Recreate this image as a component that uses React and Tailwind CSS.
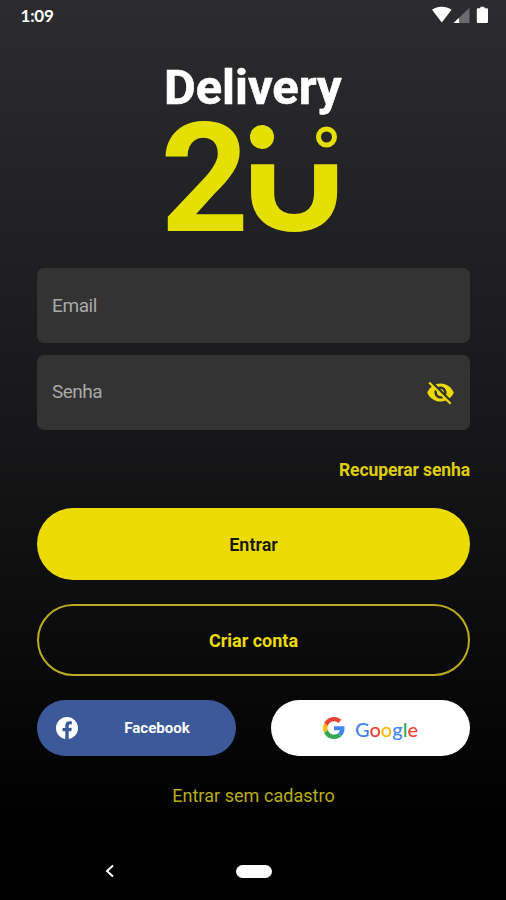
import React, { useState } from 'react';
import { MdVisibility, MdVisibilityOff } from 'react-icons/md';

function StatusBar() {
  return (
    <div className="flex h-[30px] items-center justify-between pl-[20.5px] pr-[17px]">
      <span className="font-['Lato'] text-[17px] font-bold leading-none text-white tracking-[-0.2px]">1:09</span>
      <svg width="58" height="20" viewBox="0 0 58 20" className="-mt-[1px]">
        <path d="M1 4.8C6.5.8 15 .8 20.6 4.8L10.8 17.6Z" fill="#fff" />
        <path d="M38.500 2.8V18H22.500Z" fill="#6c6c6e" />
        <path d="M28 12.800V18H22.500Z" fill="#fff" />
        <path d="M47 3.300h2.400V1.800h4v1.500h2.400q1.200 0 1.200 1.200v12.300q0 1.200-1.200 1.200H47q-1.200 0-1.200-1.200V4.500q0-1.200 1.200-1.200Z" fill="#fff" />
      </svg>
    </div>
  );
}

function Logo() {
  return (
    <svg width="190" height="208" viewBox="0 0 190 208" className="font-['Roboto'] font-bold">
      <defs>
        <clipPath id="smile">
          <rect x="80" y="104.300" width="110" height="75" />
        </clipPath>
      </defs>
      <text x="4" y="44" fontSize="49" fill="#fff" stroke="#fff" strokeWidth="0.6" textLength="177.500" lengthAdjust="spacingAndGlyphs">Delivery</text>
      <text transform="translate(0.300 171) scale(1.02 1)" fontSize="152" fill="#e5df00">2</text>
      <g clipPath="url(#smile)">
        <text x="82" y="169.500" fontSize="158" fill="#e5df00">U</text>
      </g>
      <circle cx="102" cy="77" r="12" fill="#e5df00" />
      <circle cx="166.500" cy="77" r="8" fill="none" stroke="#e5df00" strokeWidth="5" />
    </svg>
  );
}

function GoogleG() {
  return (
    <svg width="22" height="22" viewBox="0 0 48 48">
      <path fill="#EA4335" d="M24 9.500c3.540 0 6.710 1.220 9.210 3.600l6.850-6.850C35.900 2.380 30.470 0 24 0 14.620 0 6.510 5.380 2.560 13.220l7.980 6.190C12.430 13.720 17.740 9.500 24 9.500z" />
      <path fill="#4285F4" d="M46.980 24.550c0-1.570-.15-3.090-.38-4.550H24v9.020h12.940c-.58 2.960-2.260 5.480-4.780 7.180l7.730 6c4.510-4.180 7.090-10.360 7.090-17.650z" />
      <path fill="#FBBC05" d="M10.530 28.590A14.500 14.500 0 0 1 9.770 24c0-1.600.27-3.140.76-4.590l-7.980-6.190A23.900 23.900 0 0 0 0 24c0 3.880.92 7.540 2.560 10.780z" />
      <path fill="#34A853" d="M24 48c6.480 0 11.930-2.130 15.890-5.810l-7.730-6c-2.150 1.450-4.920 2.300-8.160 2.300-6.260 0-11.570-4.220-13.470-9.910l-7.980 6.190C6.510 42.620 14.620 48 24 48z" />
    </svg>
  );
}

function FacebookIcon() {
  return (
    <svg width="22" height="22" viewBox="0 0 24 24" fill="#fff">
      <path d="M24 12.070C24 5.410 18.630 0 12 0S0 5.410 0 12.070C0 18.100 4.390 23.090 10.130 24v-8.440H7.080v-3.490h3.050V9.410c0-3.020 1.790-4.690 4.530-4.690 1.310 0 2.680.24 2.680.24v2.970h-1.510c-1.490 0-1.960.93-1.960 1.890v2.250h3.330l-.53 3.490h-2.800V24C19.610 23.090 24 18.100 24 12.070z" />
    </svg>
  );
}

export default function App() {
  const [showPassword, setShowPassword] = useState(false);
  const EyeIcon = showPassword ? MdVisibility : MdVisibilityOff;

  return (
    <div className="flex h-[900px] w-[506px] flex-col overflow-hidden bg-linear-to-b/srgb from-[#2c2c2e] via-[#161618] via-50% to-black to-92% font-['Roboto',sans-serif]">
      <StatusBar />

      <div className="flex justify-center pl-[4px] pt-[30px]">
        <Logo />
      </div>

      <form className="flex flex-col pl-[37px] pr-[36px]" onSubmit={(e) => e.preventDefault()}>
        <input
          type="text"
          placeholder="Email"
          className="h-[75px] rounded-[7px] bg-[#333333] px-[15px] text-[19px] tracking-[-0.4px] text-white outline-none placeholder:text-[#a9a9a9]"
        />
        <div className="mt-[12px] flex h-[75px] items-center rounded-[7px] bg-[#333333] pl-[15px] pr-[15px]">
          <input
            type={showPassword ? 'text' : 'password'}
            placeholder="Senha"
            className="min-w-0 flex-1 bg-transparent text-[19px] tracking-[-0.5px] text-white outline-none placeholder:text-[#a9a9a9]"
          />
          <button type="button" aria-label="Mostrar senha" onClick={() => setShowPassword(!showPassword)}>
            <EyeIcon className="size-[29px] text-[#ecda05]" />
          </button>
        </div>

        <button type="button" className="mt-[28px] self-end text-[17.5px] font-bold leading-[24px] tracking-[-0.1px] text-[#dfcd0c]">
          Recuperar senha
        </button>

        <button type="submit" className="mt-[26px] h-[72px] rounded-full bg-[#ecda03] text-[18px] font-semibold text-[#16160a]">
          Entrar
        </button>
        <button type="button" className="mt-[24px] h-[72px] rounded-full border-2 border-[#bcab20] text-[18px] font-bold text-[#ecda05]">
          Criar conta
        </button>

        <div className="mt-[24px] flex justify-between">
          <button type="button" className="flex h-[56px] w-[199px] items-center rounded-full bg-[#3c5a99] pl-[19px] text-white">
            <FacebookIcon />
            <span className="flex-1 text-center text-[15px] font-bold">Facebook</span>
          </button>
          <button type="button" className="flex h-[56px] w-[199px] items-center justify-center gap-[10px] rounded-full bg-white">
            <GoogleG />
            <span className="pt-[2px] font-['Lato'] text-[20px] font-medium leading-none">
              <span className="text-[#4285f4]">G</span>
              <span className="text-[#ea4335]">o</span>
              <span className="text-[#fbbc05]">o</span>
              <span className="text-[#4285f4]">g</span>
              <span className="text-[#34a853]">l</span>
              <span className="text-[#ea4335]">e</span>
            </span>
          </button>
        </div>

        <button type="button" className="mt-[28px] self-center text-[18px] leading-[24px] tracking-[0.05px] text-[#b9ad14]">
          Entrar sem cadastro
        </button>
      </form>

      <div className="mt-auto flex h-[58px] items-center pl-[104px]">
        <svg width="12" height="14" viewBox="0 0 12 14" fill="none" stroke="#fff" strokeWidth="2">
          <path d="M9 1.500L3 7l6 5.500" />
        </svg>
        <div className="ml-[120px] h-[13px] w-[36px] rounded-full bg-white" />
      </div>
    </div>
  );
}
